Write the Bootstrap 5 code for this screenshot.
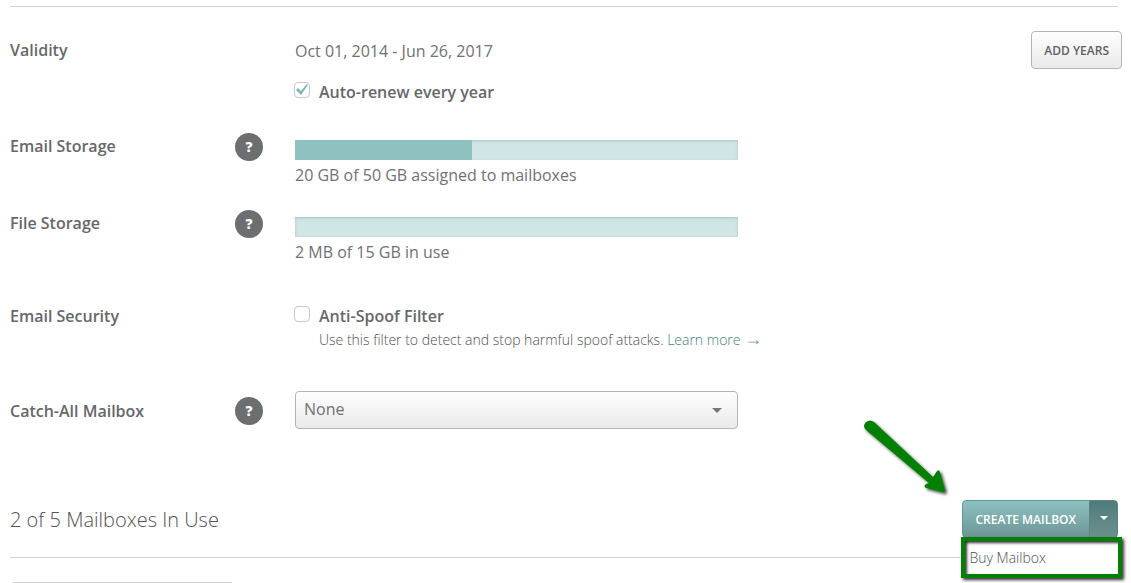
<!DOCTYPE html>
<html lang="en">
<head>
<meta charset="utf-8">
<meta name="viewport" content="width=device-width, initial-scale=1">
<title>Email subscription</title>
<link href="https://cdn.jsdelivr.net/npm/bootstrap@5.3.0/dist/css/bootstrap.min.css" rel="stylesheet">
<style>
  body { font-family: "Open Sans", sans-serif; font-size: 16px; font-weight: 400; line-height: 24px; color: #707174; background: #fff; }
  .page { padding: 6px 9px 0 10px; }
  .rule { margin: 0 4px 0 0; border: 0; border-top: 1px solid #d2d3d3; opacity: 1; }
  .setting-label { flex: 0 0 285px; padding-right: 32px; height: 28px; }
  .setting-label.tall { height: 38px; }
  .setting-label label, .setting-label span, .form-check-label { font-weight: 600; color: #66676a; }
  .storage-label > span { padding-bottom: 2px; }
  .catchall-label { padding-top: 2px; }
  .field { width: 443px; max-width: 100%; }
  .help { width: 28px; height: 28px; border: 0; padding: 0; border-radius: 50%; background: #6d6e70; color: #fff; font-size: 14px; font-weight: 800; line-height: 28px; }
  .text-line { line-height: 40px; height: 38px; }
  .date-row { margin-top: 24px; }
  .renew-check { padding-top: 11px !important; }
  .storage-row { margin-top: 29px; }
  .file-row { margin-top: 23px; }
  .security-row { margin-top: 38px; }
  .catchall-row { margin-top: 39px; }
  .mailboxes-row { margin: 71px 4px 17px 0; }

  .form-check { padding: 2px 0 0; margin: 0; min-height: 0; display: grid; grid-template-columns: 24px 1fr; }
  .form-check .form-check-input { float: none; width: 16px; height: 16px; margin: 2px 0 0 -1px; border: 1px solid #c8c8c8; border-radius: 4px; background-color: #fff; }
  .form-check .form-check-input:checked {
    border-color: #c8c8c8; background-size: 14px 14px; background-position: center;
    background-image: url("data:image/svg+xml,%3Csvg xmlns='http://www.w3.org/2000/svg' viewBox='0 0 14 14'%3E%3Cpath d='M1 7l2-2 3 3 6-7 1 1-7 10z' fill='%2379b9b8'/%3E%3C/svg%3E");
  }
  .note { grid-column: 2; font-size: 14px; font-weight: 300; color: #505153; }
  .note a { color: #417f7e; text-decoration: none; }
  .note .arrow { font-family: "Liberation Sans", sans-serif; font-size: 18px; line-height: 1; color: #6f9f9e; }

  .progress { margin: 7px 0 3px; height: 20px; border-radius: 0; background: #d0e6e6; box-shadow: inset 0 1px 3px #a9c4c1; }
  .progress-bar { background: #8ec1c0; }

  .form-select {
    height: 38px; padding: 0 40px 2px 8px; border: 1px solid #b4b4b4; border-radius: 4px; font-size: 16px; color: #707174;
    background: url("data:image/svg+xml,%3Csvg xmlns='http://www.w3.org/2000/svg' viewBox='0 0 10 5'%3E%3Cpath d='M0 0h10L5 5z' fill='%23777'/%3E%3C/svg%3E") right 15px center / 10px 5px no-repeat, linear-gradient(#fefefe, #eaeaea);
  }
  .btn { height: 38px; padding: 1px 12px 0; font-size: 12px; font-weight: 600; line-height: 36px; border-radius: 4px; }
  .btn-plain, .btn-plain:hover { color: #606164; border: 1px solid #b4b4b4; background: linear-gradient(#fefefe, #eaeaea); }
  .btn-teal, .btn-teal:hover { padding: 1px 13px 0; color: #fff; border: 1px solid #659796; background: linear-gradient(#8cc1c0, #6d9695); }
  .btn-teal.dropdown-toggle { width: 29px; padding: 0; border-color: #5c8483; background: linear-gradient(#4e7c7a, #6b9190); }
  .btn-teal.dropdown-toggle::after { margin: 0; border-width: 4px 4px 0; vertical-align: 3px; }
  .title { font-size: 20px; font-weight: 300; line-height: 40px; color: #505153; }

  /* Menu hangs from the split button, over the rule and the table below */
  .dropdown-menu.buy-menu { top: 37px; left: -1px; right: -4px; min-width: 0; padding: 0; border: 4px solid #008000; border-radius: 0; background: #fff; box-shadow: 2px 2px 3px #333, inset 2px 2px 3px #333; }
  .buy-menu .dropdown-item { padding: 0 5px; font-size: 14px; font-weight: 300; line-height: 33px; color: #505153; }
  .pointer { position: absolute; right: 166px; top: -83px; }
  .list-top { width: 219px; height: 1px; margin: 24px 0 0 3px; background: #d2d3d3; }
</style>
</head>
<body>
<main class="page">
  <hr class="rule">

  <section class="date-row d-flex">
    <div class="setting-label tall d-flex align-items-center"><span>Validity</span></div>
    <div class="flex-grow-1">
      <div class="text-line">Oct 01, 2014 - Jun 26, 2017</div>
      <div class="form-check renew-check">
        <input class="form-check-input" type="checkbox" id="renew" checked>
        <label class="form-check-label" for="renew">Auto-renew every year</label>
      </div>
    </div>
    <button type="button" class="btn btn-plain">ADD YEARS</button>
  </section>

  <section class="storage-row d-flex">
    <div class="setting-label storage-label d-flex align-items-center justify-content-between">
      <span>Email Storage</span>
      <button type="button" class="help" aria-label="Help on email storage">?</button>
    </div>
    <div class="field">
      <div class="progress"><div class="progress-bar" role="progressbar" aria-label="Email storage" aria-valuenow="40" aria-valuemin="0" aria-valuemax="100" style="width:40%"></div></div>
      <div>20 GB of 50 GB assigned to mailboxes</div>
    </div>
  </section>

  <section class="file-row d-flex">
    <div class="setting-label storage-label d-flex align-items-center justify-content-between">
      <span>File Storage</span>
      <button type="button" class="help" aria-label="Help on file storage">?</button>
    </div>
    <div class="field">
      <div class="progress"><div class="progress-bar" role="progressbar" aria-label="File storage" aria-valuenow="0" aria-valuemin="0" aria-valuemax="100" style="width:0%"></div></div>
      <div>2 MB of 15 GB in use</div>
    </div>
  </section>

  <section class="security-row d-flex">
    <div class="setting-label d-flex align-items-center"><span>Email Security</span></div>
    <div class="form-check">
      <input class="form-check-input" type="checkbox" id="spoof">
      <label class="form-check-label" for="spoof">Anti-Spoof Filter</label>
      <div class="note">Use this filter to detect and stop harmful spoof attacks. <a href="#">Learn more <span class="arrow">→</span></a></div>
    </div>
  </section>

  <section class="catchall-row d-flex">
    <div class="setting-label catchall-label tall d-flex align-items-center justify-content-between">
      <label for="catchall">Catch-All Mailbox</label>
      <button type="button" class="help" aria-label="Help on catch-all mailbox">?</button>
    </div>
    <div class="field">
      <select class="form-select" id="catchall"><option selected>None</option></select>
    </div>
  </section>

  <section class="mailboxes-row d-flex justify-content-between">
    <h1 class="title m-0">2 of 5 Mailboxes In Use</h1>
    <div class="btn-group align-self-start">
      <button type="button" class="btn btn-teal">CREATE MAILBOX</button>
      <button type="button" class="btn btn-teal dropdown-toggle dropdown-toggle-split" aria-expanded="true" aria-label="More options"></button>
      <ul class="dropdown-menu buy-menu show">
        <li><a class="dropdown-item" href="#">Buy Mailbox</a></li>
      </ul>
      <svg class="pointer" width="92" height="88" viewBox="0 0 92 88" aria-hidden="true">
        <defs><filter id="shade" x="-20%" y="-20%" width="150%" height="150%"><feDropShadow dx="2" dy="2" stdDeviation="1.5" flood-color="#222" flood-opacity=".8"/></filter></defs>
        <g filter="url(#shade)" fill="#008000">
          <path d="M6 5 Q10 2 14 5 L73 60 L77 54 Q79 52 80 55 L85 73 Q85 76 82 75 L66 71 Q63 69 66 67 L69 66 L6 13 Q2 9 6 5Z"/>
        </g>
      </svg>
    </div>
  </section>
  <hr class="rule">
  <div class="list-top"></div>
</main>
<script src="https://cdn.jsdelivr.net/npm/bootstrap@5.3.0/dist/js/bootstrap.bundle.min.js"></script>
</body>
</html>
